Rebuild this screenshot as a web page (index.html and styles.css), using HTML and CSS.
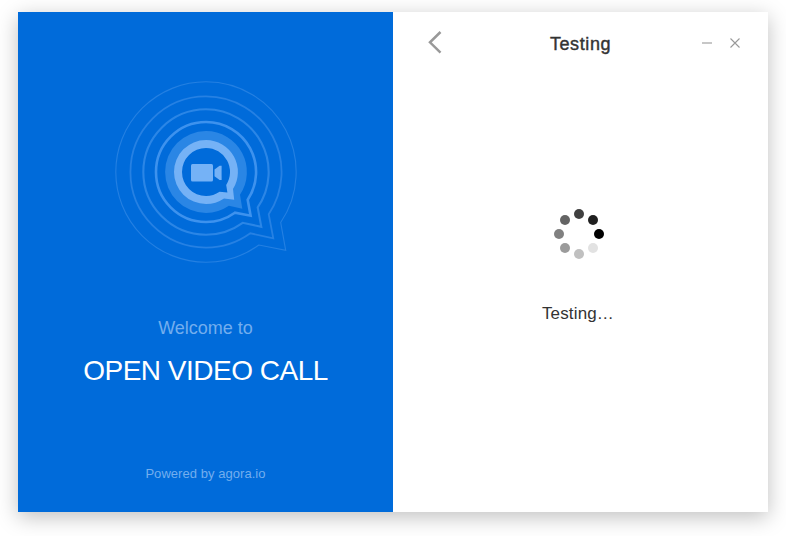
FILE: index.html
```html
<!DOCTYPE html>
<html lang="en">
<head>
<meta charset="utf-8">
<title>Open Video Call</title>
<link rel="stylesheet" href="styles.css">
</head>
<body>
<main class="window">
  <section class="brand">
    <svg class="logo" viewBox="-100 -100 200 200" fill="none">
      <path class="ring ring-4" d="M74.7 50.5A90.2 90.2 0 0 0 0 -90.2A90.2 90.2 0 0 0 0 90.2A90.2 90.2 0 0 0 52.9 73L79.7 78.3Z"/>
      <path class="ring ring-3" d="M62.7 42.2A75.6 75.6 0 0 0 0 -75.6A75.6 75.6 0 0 0 0 75.6A75.6 75.6 0 0 0 44.3 61.3L67.3 66.3Z"/>
      <path class="ring ring-2" d="M51.7 35.4A62.7 62.7 0 0 0 0 -62.7A62.7 62.7 0 0 0 0 62.7A62.7 62.7 0 0 0 36.7 50.8L55.3 54.8Z"/>
      <path class="ring ring-1" d="M41.7 27.7A50 50 0 0 0 0 -50A50 50 0 0 0 0 50A50 50 0 0 0 28.9 40.7L44.6 43.7Z"/>
      <path class="halo" d="M34 22.7A40.9 40.9 0 0 0 0 -40.9A40.9 40.9 0 0 0 0 40.9A40.9 40.9 0 0 0 22.9 33.8L36.3 36.8Z"/>
      <path class="bubble" d="M27 17A32 32 0 0 0 0 -32A32 32 0 0 0 0 32A32 32 0 0 0 18 26.4L28.2 27.8Z"/>
      <path class="core" d="M20.2 13A24 24 0 0 0 0 -24A24 24 0 0 0 0 24A24 24 0 0 0 13.6 19.8L21.4 20.6Z"/>
      <rect class="camera" x="-15" y="-8" width="22" height="17.6" rx="1.5"/>
      <path class="camera" d="M8.5 -2.5L13.6 -6.2H15.6V8H13.6L8.5 4.2Z"/>
    </svg>
    <p class="welcome">Welcome to</p>
    <h1 class="product">OPEN VIDEO CALL</h1>
    <p class="powered">Powered by agora.io</p>
  </section>
  <section class="panel">
    <header class="titlebar">
      <svg class="back" viewBox="0 0 16 24"><path d="M13.5 2L3 12.3L13.5 22.6"/></svg>
      <h2 class="title">Testing</h2>
      <div class="controls">
        <svg class="control" viewBox="0 0 12 12"><path d="M1 6H11"/></svg>
        <svg class="control" viewBox="0 0 12 12"><path d="M1.5 1.5L10.5 10.5M10.5 1.5L1.5 10.5"/></svg>
      </div>
    </header>
    <svg class="spinner" viewBox="-25 -25 50 50">
      <circle cx="20" cy="0" r="5" fill="#000"/>
      <circle cx="14" cy="-14" r="5" fill="#202020"/>
      <circle cx="0" cy="-20" r="5" fill="#404040"/>
      <circle cx="-14" cy="-14" r="5" fill="#646464"/>
      <circle cx="-20" cy="0" r="5" fill="#808080"/>
      <circle cx="-14" cy="14" r="5" fill="#9b9b9b"/>
      <circle cx="0" cy="20" r="5" fill="#c0c0c0"/>
      <circle cx="14" cy="14" r="5" fill="#e2e2e2"/>
    </svg>
    <p class="status">Testing…</p>
  </section>
</main>
</body>
</html>
```
FILE: styles.css
```css
* { box-sizing: border-box; }
body {
  margin: 0;
  height: 536px;
  padding: 12px 18px;
  background: #fff;
  font-family: "Liberation Sans", Arial, sans-serif;
}
h1, h2, p { margin: 0; font-weight: 400; }
svg { display: block; }
.window {
  display: flex;
  width: 750px;
  height: 500px;
  background: #fff;
  box-shadow: 0 5px 20px rgba(0, 0, 0, .25);
}
.brand, .panel {
  display: flex;
  flex-direction: column;
  align-items: center;
  width: 375px;
}
.brand {
  padding-top: 60px;
  background: #006bda;
}
.logo { width: 200px; height: 200px; margin-left: 1px; }
.ring-1 { stroke-width: 2.6; stroke: #3d92ee; }
.ring-2 { stroke-width: 2.1; stroke: #2b86e6; }
.ring-3 { stroke-width: 1.8; stroke: #2681e3; }
.ring-4 { stroke-width: 1.1; stroke: #2480e2; }
.halo { fill: #2a86e5; }
.bubble, .camera { fill: #75b2f6; }
.core { fill: #006bda; }
.welcome {
  margin-top: 45px;
  font-size: 18px;
  line-height: 22px;
  color: #73aeee;
}
.product {
  margin-top: 15px;
  font-size: 28px;
  line-height: 34px;
  letter-spacing: -.5px;
  color: #fff;
}
.powered {
  margin-top: 77px;
  font-size: 13px;
  line-height: 18px;
  letter-spacing: .05px;
  color: #73aeee;
}
.titlebar {
  display: grid;
  grid-template-columns: 75px 1fr 75px;
  align-items: center;
  width: 100%;
  height: 62px;
  padding: 0 16px;
}
.back { width: 16px; height: 24px; margin: -2px 0 0 18px; }
.back path { fill: none; stroke: #999; stroke-width: 2.5; }
.title {
  padding-top: 2px;
  font-size: 18px;
  line-height: 22px;
  letter-spacing: .6px;
  text-align: center;
  color: #333;
  -webkit-text-stroke: .4px #333;
}
.controls { display: flex; gap: 16px; justify-content: flex-end; padding-right: 11px; }
.control { width: 12px; height: 12px; }
.control path { fill: none; stroke: #999; stroke-width: 1.1; }
.spinner { width: 50px; height: 50px; margin: 135px 0 0 -3px; }
.status {
  margin-top: 45px;
  margin-left: -5px;
  font-size: 17px;
  line-height: 20px;
  letter-spacing: .15px;
  color: #333;
}
```
